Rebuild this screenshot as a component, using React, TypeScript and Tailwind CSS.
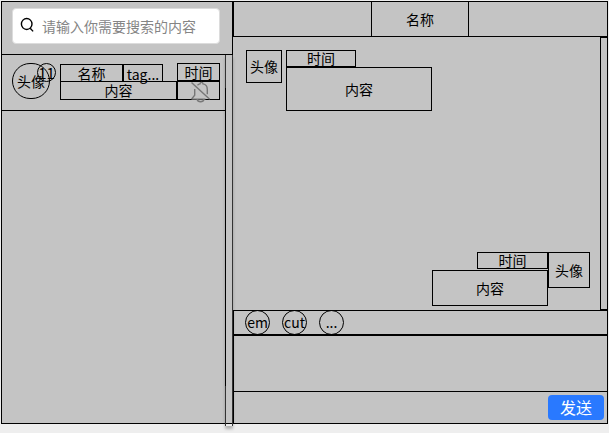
import type { ReactNode } from "react";

function Box({ className = "", children }: { className?: string; children?: ReactNode }) {
  return (
    <div className={`flex shrink-0 items-center justify-center whitespace-nowrap border border-black ${className}`}>
      {children}
    </div>
  );
}

function SearchIcon() {
  return (
    <svg className="-mt-0.5 ml-[7px] h-4 w-4 shrink-0" viewBox="0 0 16 16" fill="none" stroke="#000" strokeWidth="1.4">
      <ellipse cx="6.7" cy="7" rx="5.3" ry="5.5" />
      <path d="M10.200 11.200l2.900 3.200" />
    </svg>
  );
}

function MutedBell() {
  return (
    <svg className="ml-1 mt-[3px] h-[22px] w-[22px] shrink-0" viewBox="0 0 22 22" fill="none" stroke="#777" strokeWidth="1.4">
      <path d="M1.500 1.500l18.200 16.800M1.500 18.100h14M1.500 18.100l3.200-3.800V8M7.500 4.200c1-.9 1.800-1.200 2.500-1.300.1-2 2.900-2 3 0 3 .5 4.300 2.800 4.300 5.600v4.800M7.200 18.500c.7 2.900 6 2.900 6.700 0" />
    </svg>
  );
}

function ConversationRow() {
  return (
    <div className="flex h-14 w-56 border-b border-black pl-[10px] pt-2">
      <div className="relative h-9 w-[38px] shrink-0">
        <Box className="h-9 w-[38px] rounded-full">头像</Box>
        <Box className="absolute left-[25px] top-0 h-[19px] w-[19px] rounded-full text-[15px] leading-none">11</Box>
      </div>
      <div className="ml-[10px] mt-px w-[117px] shrink-0">
        <div className="flex h-[17px]">
          <Box className="h-[18px] w-[63px]">名称</Box>
          <Box className="h-[18px] w-10 pt-px">tag...</Box>
        </div>
        <Box className="h-[19px] w-[117px] pb-0.5">内容</Box>
      </div>
      <div className="w-[43px] shrink-0">
        <Box className="h-[18px] w-[43px]">时间</Box>
        <Box className="h-[19px] w-[43px]">
          <MutedBell />
        </Box>
      </div>
    </div>
  );
}

function Sidebar() {
  return (
    <aside className="flex h-[423px] w-[232px] shrink-0 flex-col border border-black">
      <div className="h-[53px] shrink-0 border-b border-black pl-[10px] pt-1.5">
        <label className="flex h-9 w-[208px] items-center rounded border border-[#dcdcdc] bg-white">
          <SearchIcon />
          <input
            className="ml-[6px] w-[164px] bg-transparent p-0 text-sm leading-5 outline-none placeholder:text-[#858585]"
            placeholder="请输入你需要搜索的内容"
          />
        </label>
      </div>
      <div className="flex h-[369px] justify-between">
        <ConversationRow />
        <div className="-ml-px -mr-px flex h-[371px] w-2 shrink-0 flex-col border-x border-[#333] shadow-[0_3px_3px_rgba(0,0,0,0.25)]">
          <div className="-ml-px mt-[33px] h-[298px] w-2 shrink-0 border-l border-black" />
        </div>
      </div>
    </aside>
  );
}

function Messages() {
  return (
    <div className="flex h-[273px] w-[374px] justify-between">
      <div className="flex w-[357px] flex-col justify-between pb-[4px] pl-[13px] pt-[13px]">
        <div className="flex">
          <Box className="h-[33px] w-9 pb-px">头像</Box>
          <div className="ml-1">
            <Box className="h-[17px] w-[70px] pb-px">时间</Box>
            <Box className="h-11 w-[146px]">内容</Box>
          </div>
        </div>
        <div className="flex self-end">
          <div className="flex flex-col items-end">
            <Box className="h-[17px] w-[71px] pb-px">时间</Box>
            <Box className="mt-px h-9 w-[116px]">内容</Box>
          </div>
          <Box className="h-9 w-[42px]">头像</Box>
        </div>
      </div>
      <div className="-mr-px h-[273px] w-2 border border-black" />
    </div>
  );
}

function Chat() {
  return (
    <main className="flex h-[423px] w-[375px] shrink-0 flex-col border border-b-0 border-l-0 border-black">
      <header className="flex h-[35px] shrink-0 border-b border-l border-black">
        <div className="w-[137px]" />
        <div className="flex w-[98px] items-center justify-center border-x border-black">名称</div>
      </header>
      <Messages />
      <div className="flex h-[25px] shrink-0 gap-3 border-y border-l border-black pl-[11px]">
        <Box className="-mt-px h-[25px] w-[25px] rounded-full pb-px">em</Box>
        <Box className="-mt-px h-[25px] w-[25px] rounded-full pb-px">cut</Box>
        <Box className="-mt-px h-[25px] w-[25px] rounded-full pb-px">...</Box>
      </div>
      <div className="h-[57px] shrink-0 border-y border-l border-black" />
      <div className="flex h-8 shrink-0 justify-end border-b border-l border-black pr-[3px] pt-[3px]">
        <button className="flex h-[25px] w-14 items-center justify-center rounded bg-[#2979ff] pb-px text-base leading-none text-white">
          发送
        </button>
      </div>
    </main>
  );
}

export default function App() {
  return (
    <div className="h-[433px] w-[609px] overflow-hidden bg-[#eee] pl-px pt-px font-['Noto_Sans_CJK_SC','Noto_Sans',sans-serif] text-sm leading-none text-black">
      <div className="flex h-[423px] w-[607px] bg-[#c4c4c4]">
        <Sidebar />
        <Chat />
      </div>
    </div>
  );
}
